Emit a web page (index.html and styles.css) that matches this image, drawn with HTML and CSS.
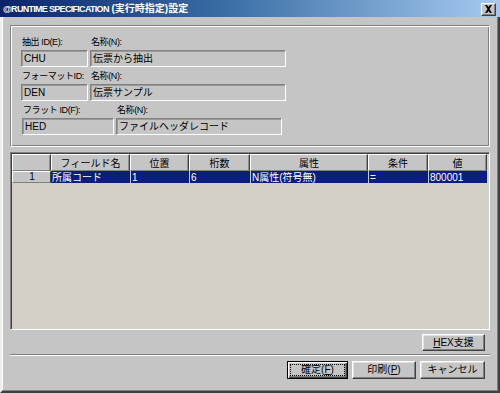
FILE: index.html
```html
<!DOCTYPE html>
<html lang="ja">
<head>
    <meta charset="UTF-8">
    <title>@RUNTIME SPECIFICATION (実行時指定)設定</title>
    <link rel="stylesheet" href="styles.css">
</head>
<body>
    <div class="window">
        <div class="titlebar">
            <span class="title"><span class="title-en">@RUNTIME SPECIFICATION</span> <span class="title-ja">(実行時指定)設定</span></span>
            <span class="close">
                <svg width="9" height="8" viewBox="0 0 9 8"><path d="M1 0h2l1.5 2 1.5-2h2L5.5 4 8 8H6L4.5 6 3 8H1l2.5-4z" fill="#000"/></svg>
            </span>
        </div>
        <div class="body">
            <div class="group">
                <div class="row">
                    <span class="label">抽出 ID(E):</span>
                    <span class="label">名称(N):</span>
                    <div class="field">CHU</div>
                    <div class="field">伝票から抽出</div>
                </div>
                <div class="row">
                    <span class="label">フォーマットID:</span>
                    <span class="label">名称(N):</span>
                    <div class="field">DEN</div>
                    <div class="field">伝票サンプル</div>
                </div>
                <div class="row row-flat">
                    <span class="label">フラット ID(F):</span>
                    <span class="label">名称(N):</span>
                    <div class="field">HED</div>
                    <div class="field">ファイルヘッダレコード</div>
                </div>
            </div>

            <div class="grid">
                <table>
                    <colgroup>
                        <col style="width:39px"><col style="width:79px"><col style="width:59px"><col style="width:61px">
                        <col style="width:118px"><col style="width:60px"><col style="width:59px">
                    </colgroup>
                    <thead>
                        <tr>
                            <th></th>
                            <th>フィールド名</th>
                            <th>位置</th>
                            <th>桁数</th>
                            <th>属性</th>
                            <th>条件</th>
                            <th>値</th>
                        </tr>
                    </thead>
                    <tbody>
                        <tr class="selected">
                            <td class="rowhead">1</td>
                            <td>所属コード</td>
                            <td>1</td>
                            <td>6</td>
                            <td>N属性(符号無)</td>
                            <td>=</td>
                            <td>800001</td>
                        </tr>
                    </tbody>
                </table>
            </div>

            <div class="hex-row">
                <button class="btn btn-hex"><u>H</u>EX支援</button>
            </div>
            <div class="separator"></div>
            <div class="actions">
                <button class="btn btn-ok"><span class="focus">確定(<u>F</u>)</span></button>
                <button class="btn btn-print">印刷(<u>P</u>)</button>
                <button class="btn btn-cancel">キャンセル</button>
            </div>
        </div>
    </div>
</body>
</html>
```

FILE: styles.css
```css
body {
    margin: 0;
    font-family: "Liberation Sans", "Noto Sans CJK JP", sans-serif;
    font-size: 10px;
    color: #000000;
    background-color: #c5c5c5;
}
.window {
    width: 500px;
    height: 393px;
    display: flex;
    flex-direction: column;
    background-color: #c5c5c5;
}
.titlebar {
    height: 17px;
    flex: 0 0 17px;
    display: flex;
    align-items: center;
    justify-content: space-between;
    padding: 0 4px 0 3px;
    background: linear-gradient(to right, #0a246a 0%, #3a6ea5 45%, #a6caf0 100%);
    color: #ffffff;
    font-weight: bold;
}
.title {
    white-space: nowrap;
    line-height: 17px;
}
.title-en {
    font-size: 9px;
    letter-spacing: -0.7px;
}
.title-ja {
    font-size: 10px;
}
.close {
    width: 13px;
    height: 11px;
    display: flex;
    align-items: center;
    justify-content: center;
    background-color: #c5c5c5;
    border: 1px solid;
    border-color: #ffffff #404040 #404040 #ffffff;
    box-shadow: inset -1px -1px #808080;
    margin-top: 1px;
}
.body {
    flex: 1;
    display: flex;
    flex-direction: column;
    border-left: 2px solid #eeeeee;
    border-right: 2px solid #404040;
    border-bottom: 2px solid #404040;
    box-shadow: inset -1px -1px #808080, inset 1px 0 #ffffff;
}

/* group box */
.group {
    margin: 8px 8px 0;
    height: 122px;
    box-sizing: border-box;
    padding: 10px 10px 0;
    border: 1px solid;
    border-color: #808080 #ffffff #ffffff #808080;
    box-shadow: inset 1px 1px #ffffff, inset -1px -1px #808080;
}
.row {
    display: grid;
    grid-template-columns: 67px 196px;
    grid-template-rows: 13px 17px;
    column-gap: 2px;
    row-gap: 1px;
    margin-bottom: 3px;
}
.row-flat {
    grid-template-columns: 92px 166px;
    margin-left: 1px;
}
.label {
    font-size: 9px;
    letter-spacing: -0.4px;
    line-height: 13px;
    padding-left: 1px;
    white-space: nowrap;
}
.field {
    box-sizing: border-box;
    height: 17px;
    line-height: 15px;
    padding-left: 2px;
    border: 1px solid;
    border-color: #808080 #ffffff #ffffff #808080;
    box-shadow: inset 1px 1px #9a9a9a;
    white-space: nowrap;
}

/* grid */
.grid {
    margin: 5px 8px 0;
    height: 178px;
    box-sizing: border-box;
    background-color: #d4d0c8;
    border: 1px solid;
    border-color: #808080 #ffffff #ffffff #808080;
    box-shadow: inset 1px 1px #404040, inset -1px -1px #d4d0c8;
    padding: 1px;
}
table {
    border-collapse: separate;
    border-spacing: 0;
    table-layout: fixed;
    width: 475px;
    font-size: 10px;
}
th {
    height: 16px;
    box-sizing: border-box;
    padding: 0;
    font-weight: normal;
    text-align: center;
    background-color: #c5c5c5;
    border-top: 1px solid #ffffff;
    border-left: 1px solid #ffffff;
    border-right: 1px solid #404040;
    border-bottom: 1px solid #808080;
    box-shadow: inset -1px 0 #909090;
}
td {
    height: 12px;
    box-sizing: border-box;
    padding: 0 0 0 1px;
    line-height: 11px;
    white-space: nowrap;
    overflow: hidden;
}
.selected td {
    background-color: #0b1d80;
    color: #ffffff;
    border-left: 1px solid #c8c8c8;
}
.selected td.rowhead {
    background-color: #c5c5c5;
    color: #000000;
    text-align: center;
    border-top: 1px solid #ffffff;
    border-left: 1px solid #ffffff;
    border-right: 1px solid #404040;
    border-bottom: 1px solid #808080;
    line-height: 10px;
}
.selected td.rowhead + td {
    border-left: none;
}

/* buttons */
.btn {
    font-family: inherit;
    font-size: 10px;
    color: #000000;
    height: 18px;
    box-sizing: border-box;
    padding: 0;
    background-color: #c5c5c5;
    border: 1px solid;
    border-color: #ffffff #404040 #404040 #ffffff;
    box-shadow: inset -1px -1px #808080, inset 1px 1px #e0e0e0;
    line-height: 14px;
}
.hex-row {
    display: flex;
    justify-content: flex-end;
    margin: 4px 13px 0 0;
}
.btn-hex {
    width: 63px;
    height: 17px;
}
.separator {
    margin: 3px 8px 0;
    height: 0;
    border-top: 1px solid #808080;
    border-bottom: 1px solid #ffffff;
}
.actions {
    display: flex;
    justify-content: flex-end;
    gap: 4px;
    margin: 5px 13px 0 0;
}
.btn-ok {
    width: 61px;
    border-color: #000000;
    box-shadow: inset 1px 1px #ffffff, inset -1px -1px #404040, inset -2px -2px #808080;
    padding: 2px;
}
.btn-ok .focus {
    display: block;
    height: 100%;
    box-sizing: border-box;
    border: 1px dotted #000000;
    line-height: 10px;
}
.btn-print {
    width: 64px;
}
.btn-cancel {
    width: 65px;
}
```
